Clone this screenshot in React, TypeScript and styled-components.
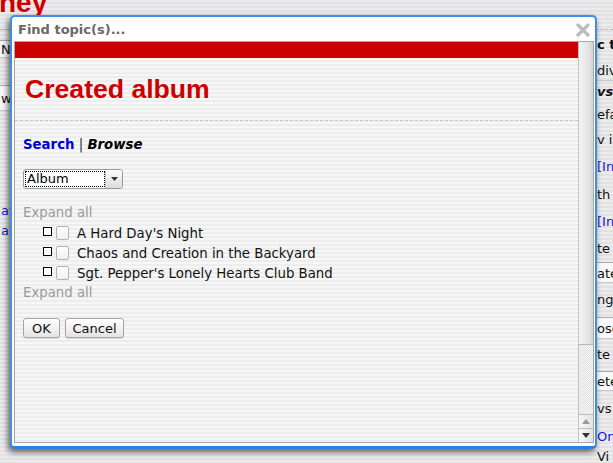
import styled, { createGlobalStyle } from "styled-components";

const GlobalStyle = createGlobalStyle`
  html, body {
    margin: 0;
    padding: 0;
  }
  body {
    width: 613px;
    height: 463px;
    overflow: hidden;
    font-family: "DejaVu Sans", Verdana, sans-serif;
    background: repeating-linear-gradient(to bottom, #ececec 0 2px, #e2e2e2 2px 4px);
  }
`;

const Page = styled.div`
  position: relative;
  width: 613px;
  height: 463px;
  overflow: hidden;
  display: flex;
  flex-direction: column;
`;

const PageHeader = styled.div`
  height: 15px;
  flex: 0 0 15px;
  white-space: nowrap;
`;

const PageTitle = styled.div`
  margin: -11px 0 0 -1px;
  font: bold 28px/28px "Liberation Sans", Arial, sans-serif;
  color: #cc0000;
`;

const PageBody = styled.div`
  flex: 1;
  display: flex;
`;

const LeftStrip = styled.div`
  width: 10px;
  overflow: hidden;
  white-space: nowrap;
  font-size: 13px;
  display: flex;
  flex-direction: column;
`;

const Middle = styled.div`
  flex: 1;
`;

const RightStrip = styled.div`
  width: 17px;
  overflow: hidden;
  white-space: nowrap;
  font-size: 13px;
  display: flex;
  flex-direction: column;
  margin-top: -15px;
`;

const BgRow = styled.div<{ $h: number; $kind?: string }>`
  flex: 0 0 ${(p) => p.$h}px;
  height: ${(p) => p.$h}px;
  line-height: ${(p) => p.$h}px;
  padding-left: 1px;
  color: ${(p) => (p.$kind === "link" ? "#1a1ad0" : "#111")};
  font-weight: ${(p) => (p.$kind === "bold" || p.$kind === "bolditalic" ? "bold" : "normal")};
  font-style: ${(p) => (p.$kind === "bolditalic" ? "italic" : "normal")};
  background: ${(p) => (p.$kind === "box" ? "#f8f8f8" : "transparent")};
  border-top: ${(p) => (p.$kind === "box" ? "1px solid #aaa" : "none")};
  border-bottom: ${(p) =>
    p.$kind === "dash" ? "1px dashed #b8b8b8" : p.$kind === "line" || p.$kind === "box" ? "1px solid #c8c8c8" : "none"};
  box-sizing: border-box;
`;

const Dialog = styled.div`
  position: absolute;
  left: 10px;
  top: 15px;
  width: 587px;
  height: 434px;
  box-sizing: border-box;
  border: 2px solid #3d8fe6;
  border-bottom-width: 3px;
  border-bottom-color: #2f7fdc;
  border-radius: 5px;
  background: #fff;
  box-shadow: -2px 3px 6px rgba(0, 0, 0, 0.6);
  display: flex;
  flex-direction: column;
  padding: 0 1px 3px 2px;
`;

const TitleBar = styled.div`
  flex: 0 0 24px;
  display: flex;
  justify-content: space-between;
  align-items: flex-start;
  padding: 5px 4px 0 4px;
  box-sizing: border-box;
  font: bold 13px/16px "DejaVu Sans", Verdana, sans-serif;
  color: #686868;
`;

const CloseIcon = styled.svg`
  margin-top: 1px;
`;

const Frame = styled.div`
  flex: 1;
  display: flex;
  border: 1px solid #a8a8a8;
  overflow: hidden;
  background: repeating-linear-gradient(to bottom, #f7f7f7 0 2px, #ededed 2px 4px);
`;

const Content = styled.div`
  flex: 1;
  display: flex;
  flex-direction: column;
`;

const RedBar = styled.div`
  height: 16px;
  background: #cc0000;
`;

const Heading = styled.div`
  padding: 16px 10px;
  border-bottom: 1px dashed #c6c6c6;
`;

const H1 = styled.h1`
  margin: 0;
  font: bold 26.6px/30px "Liberation Sans", Arial, sans-serif;
  color: #cc0000;
`;

const Body = styled.div`
  padding: 16px 8px;
  font-size: 13.3px;
  color: #111;
`;

const Tabs = styled.div`
  font: bold 13.3px/16px "DejaVu Sans", Verdana, sans-serif;
`;

const TabLink = styled.span`
  color: #0000cc;
`;

const TabSep = styled.span`
  font-weight: normal;
  color: #333;
`;

const TabCurrent = styled.span`
  font-style: italic;
  color: #000;
`;

const Select = styled.div`
  margin-top: 16px;
  width: 100px;
  height: 20px;
  box-sizing: border-box;
  display: flex;
  border: 1px solid #9c9c9c;
  border-radius: 3px;
  background: #fff;
  overflow: hidden;
`;

const SelectValue = styled.div`
  flex: 1;
  margin: 1px 0 1px 1px;
  outline: 1px dotted #000;
  outline-offset: -1px;
  padding-left: 2px;
  font-size: 13px;
  line-height: 16px;
  color: #000;
`;

const SelectButton = styled.div`
  width: 16px;
  display: flex;
  align-items: center;
  justify-content: center;
  background: linear-gradient(to bottom, #fdfdfd, #dcdcdc);
  border-left: 1px solid #c8c8c8;
`;

const Expand = styled.div<{ $first?: boolean }>`
  margin-top: ${(p) => (p.$first ? "14px" : "0")};
  line-height: 20px;
  color: #9a9a9a;
`;

const TreeRow = styled.div`
  height: 20px;
  display: flex;
  align-items: center;
  padding-left: 20px;
`;

const Toggle = styled.span`
  width: 9px;
  height: 9px;
  box-sizing: border-box;
  border: 1px solid #000;
  background: #fff;
  margin-top: -3px;
`;

const Check = styled.span`
  width: 13px;
  height: 14px;
  box-sizing: border-box;
  margin: 0 8px 0 4px;
  border: 1px solid #b4b4b4;
  border-radius: 2px;
  background: linear-gradient(to bottom, #fff, #f0f0f0);
`;

const Buttons = styled.div`
  margin-top: 15px;
  display: flex;
  gap: 5px;
`;

const Button = styled.button<{ $w: number }>`
  width: ${(p) => p.$w}px;
  height: 20px;
  padding: 0;
  font: 13px "DejaVu Sans", Verdana, sans-serif;
  color: #111;
  border: 1px solid #a6a6a6;
  border-radius: 3px;
  background: linear-gradient(to bottom, #ffffff, #f1f1f1 50%, #e4e4e4);
  box-shadow: 0 1px 1px rgba(0, 0, 0, 0.12);
`;

const Scrollbar = styled.div`
  width: 15px;
  display: flex;
  flex-direction: column;
  border-left: 1px solid #c2c2c2;
  box-sizing: border-box;
`;

const Thumb = styled.div`
  flex: 0 0 303px;
  display: flex;
  align-items: center;
  justify-content: center;
  background: linear-gradient(to right, #f3f3f3, #e6e6e6 60%, #d4d4d4);
  border-bottom: 1px solid #b8b8b8;
  box-sizing: border-box;
`;

const Grip = styled.div`
  width: 8px;
  height: 8px;
  background-image: radial-gradient(circle, #8a8a8a 45%, transparent 50%);
  background-size: 2px 2px;
`;

const Track = styled.div`
  flex: 1;
  background: repeating-conic-gradient(#f6f6f6 0 25%, #e2e2e2 0 50%) 0 0 / 2px 2px;
`;

const Arrow = styled.div`
  flex: 0 0 14px;
  display: flex;
  align-items: center;
  justify-content: center;
  border-top: 1px solid #bdbdbd;
  box-sizing: border-box;
  background: linear-gradient(to right, #f8f8f8, #e2e2e2);
`;

const albums = [
  "A Hard Day's Night",
  "Chaos and Creation in the Backyard",
  "Sgt. Pepper's Lonely Hearts Club Band",
];

const rightRows: { h: number; text: string; kind?: string }[] = [
  { h: 30, text: "", kind: "dash" },
  { h: 30, text: "c t", kind: "bold" },
  { h: 21, text: "div", kind: "line" },
  { h: 22, text: "vs", kind: "bolditalic" },
  { h: 24, text: "efa" },
  { h: 26, text: "v i" },
  { h: 28, text: "[Ind", kind: "link" },
  { h: 28, text: "th" },
  { h: 26, text: "[Ind", kind: "link" },
  { h: 27, text: "te" },
  { h: 21, text: "ate", kind: "box" },
  { h: 34, text: "ng" },
  { h: 22, text: "ose", kind: "box" },
  { h: 32, text: "te" },
  { h: 20, text: "ete", kind: "box" },
  { h: 36, text: "vs" },
  { h: 20, text: "On", kind: "link" },
  { h: 20, text: "Vi" },
];

const leftRows: { h: number; text: string; kind?: string }[] = [
  { h: 15, text: "", kind: "dash" },
  { h: 10, text: "" },
  { h: 18, text: "N", kind: "box" },
  { h: 27, text: "" },
  { h: 26, text: "ww", kind: "box" },
  { h: 90, text: "" },
  { h: 20, text: "at", kind: "link" },
  { h: 20, text: "ar", kind: "link" },
];

export default function App() {
  return (
    <>
      <GlobalStyle />
      <Page>
        <PageHeader>
          <PageTitle>ney</PageTitle>
        </PageHeader>
        <PageBody>
          <LeftStrip>
            {leftRows.map((r, i) => (
              <BgRow key={i} $h={r.h} $kind={r.kind}>
                {r.text}
              </BgRow>
            ))}
          </LeftStrip>
          <Middle />
          <RightStrip>
            {rightRows.map((r, i) => (
              <BgRow key={i} $h={r.h} $kind={r.kind}>
                {r.text}
              </BgRow>
            ))}
          </RightStrip>
        </PageBody>

        <Dialog>
          <TitleBar>
            <span>Find topic(s)...</span>
            <CloseIcon width="14" height="14" viewBox="0 0 14 14">
              <path d="M2 2 L12 12 M12 2 L2 12" stroke="#bdbdbd" strokeWidth="3.4" strokeLinecap="round" />
            </CloseIcon>
          </TitleBar>
          <Frame>
            <Content>
              <RedBar />
              <Heading>
                <H1>Created album</H1>
              </Heading>
              <Body>
                <Tabs>
                  <TabLink>Search</TabLink>
                  <TabSep> | </TabSep>
                  <TabCurrent>Browse</TabCurrent>
                </Tabs>
                <Select>
                  <SelectValue>Album</SelectValue>
                  <SelectButton>
                    <svg width="7" height="4" viewBox="0 0 7 4">
                      <polygon points="0,0 7,0 3.5,4" fill="#333" />
                    </svg>
                  </SelectButton>
                </Select>
                <Expand $first>Expand all</Expand>
                {albums.map((a) => (
                  <TreeRow key={a}>
                    <Toggle />
                    <Check />
                    <span>{a}</span>
                  </TreeRow>
                ))}
                <Expand>Expand all</Expand>
                <Buttons>
                  <Button $w={37}>OK</Button>
                  <Button $w={59}>Cancel</Button>
                </Buttons>
              </Body>
            </Content>
            <Scrollbar>
              <Thumb>
                <Grip />
              </Thumb>
              <Track />
              <Arrow>
                <svg width="8" height="5" viewBox="0 0 8 5">
                  <polygon points="0,5 8,5 4,0" fill="#9a9a9a" />
                </svg>
              </Arrow>
              <Arrow>
                <svg width="8" height="5" viewBox="0 0 8 5">
                  <polygon points="0,0 8,0 4,5" fill="#333" />
                </svg>
              </Arrow>
            </Scrollbar>
          </Frame>
        </Dialog>
      </Page>
    </>
  );
}
